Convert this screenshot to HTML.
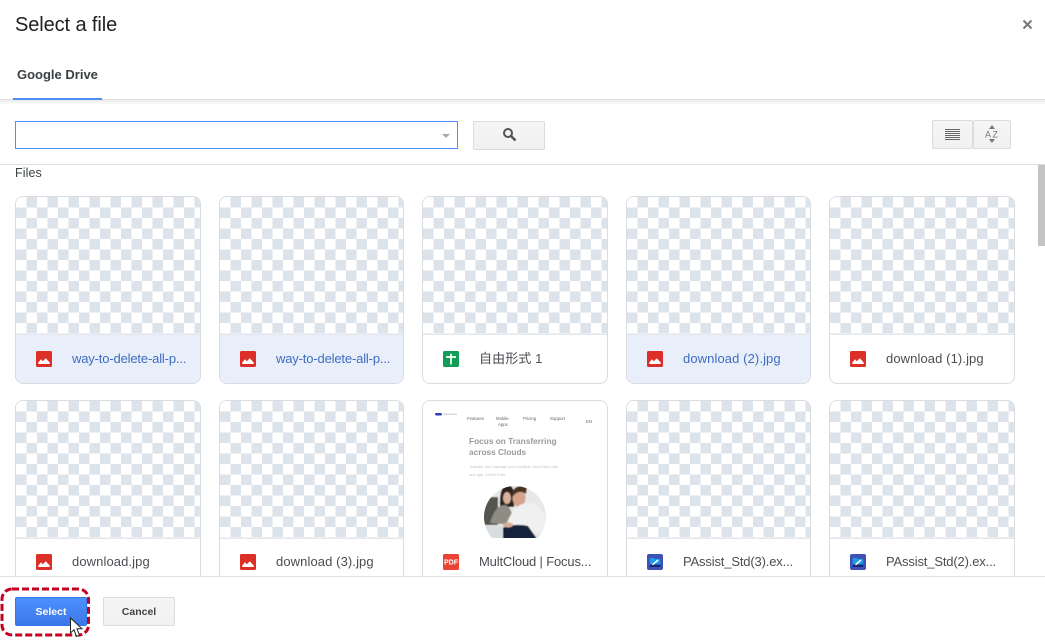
<!DOCTYPE html>
<html><head><meta charset="utf-8"><style>
html,body{margin:0;padding:0;background:#fff}
body{width:1045px;height:641px;position:relative;overflow:hidden;font-family:"Liberation Sans","Noto Sans CJK SC",sans-serif;color:#3c4043}
.a{position:absolute}
.card{position:absolute;width:184px;height:186px;border:1px solid #dadce0;border-radius:8px;overflow:hidden;background:#fff;box-sizing:content-box}
.w2{width:183px}
.thumb{position:absolute;left:0;top:0;right:0;height:137px;background:repeating-conic-gradient(#dde3ea 0 25%,#fff 0 50%) 0 0/21px 21px}
.foot{position:absolute;left:0;right:0;top:137px;bottom:0;border-top:1px solid #e3e6ea;color:#4a4d52}
.sel .foot{background:#e8effb;color:#3f6cc0}
.ic{position:absolute;left:20px;top:16px;width:16px;height:16px}
.nm{position:absolute;left:56px;top:15px;font-size:13px;line-height:18px;white-space:nowrap;letter-spacing:.1px}
.r2 .ic{top:15px}
.r2 .nm{top:14px}
.long{letter-spacing:-.16px}
.btn{position:absolute;box-sizing:border-box;border:1px solid #dcdcdc;border-radius:2px;background:linear-gradient(#f5f5f5,#f1f1f1)}
</style></head><body>
<div class="a" style="left:15px;top:13px;font-size:20px;line-height:24px;color:#202124;letter-spacing:-.1px">Select a file</div>
<svg class="a" style="left:1022px;top:19px" width="11" height="11" viewBox="0 0 11 11"><path d="M1.500 1.500L9.500 9.500M9.500 1.500L1.500 9.500" stroke="#777" stroke-width="2"/></svg>
<div class="a" style="left:17px;top:66px;font-size:13px;line-height:17px;font-weight:bold;color:#3c4043">Google Drive</div>
<div class="a" style="left:0;top:99px;width:1045px;height:1px;background:#dedede"></div>
<div class="a" style="left:0;top:100px;width:1045px;height:5px;background:linear-gradient(#ececec,#fff)"></div>
<div class="a" style="left:13px;top:98px;width:89px;height:2px;background:#4d8df6"></div>

<div class="a" style="left:15px;top:121px;width:443px;height:28px;box-sizing:border-box;border:1px solid #4d90fe"></div>
<div class="a" style="left:442px;top:134px;width:0;height:0;border-left:4px solid transparent;border-right:4px solid transparent;border-top:4px solid #aaa"></div>
<div class="btn" style="left:473px;top:121px;width:72px;height:29px"></div>
<svg class="a" style="left:502px;top:127px" width="15" height="15" viewBox="0 0 15 15"><circle cx="6" cy="6" r="4" fill="none" stroke="#555" stroke-width="2"/><path d="M9 9L13.500 13.500" stroke="#555" stroke-width="2.600"/></svg>
<div class="btn" style="left:932px;top:120px;width:41px;height:29px"></div>
<div class="btn" style="left:973px;top:120px;width:38px;height:29px"></div>
<svg class="a" style="left:945px;top:129px" width="15" height="11" viewBox="0 0 15 11"><path d="M0 .5H15M0 2.500H15M0 4.500H15M0 6.500H15M0 8.500H15M0 10.500H15" stroke="#666" stroke-width="1"/></svg>
<svg class="a" style="left:984px;top:125px" width="16" height="19" viewBox="0 0 16 19"><path d="M8 0L11 4H5Z M8 18L5 14H11Z" fill="#777"/><text x="1" y="12.500" font-size="9" font-family="Liberation Sans" fill="#777">A</text><text x="8.500" y="12.500" font-size="9" font-family="Liberation Sans" fill="#777">Z</text></svg>
<div class="a" style="left:0;top:164px;width:1045px;height:1px;background:#e0e0e0"></div>
<div class="a" style="left:15px;top:166px;font-size:12.500px;line-height:15px;letter-spacing:.1px;color:#3c4043">Files</div>
<div class="a" style="left:1038px;top:165px;width:7px;height:81px;background:#c4c4c4"></div>

<div class="a" style="left:0;top:165px;width:1037px;height:411px;overflow:hidden">
<div class="card sel" style="left:15px;top:31px"><div class="thumb"></div><div class="foot"><svg class="ic" viewBox="0 0 16 16"><rect width="16" height="16" rx="1.500" fill="#dc2f27"/><path d="M2.300 13V11.500L5 8.300L6.800 10.300L9.800 7.200L13.700 11.500V13Z" fill="#fff"/></svg><div class="nm long">way-to-delete-all-p...</div></div></div>
<div class="card sel w2" style="left:219px;top:31px"><div class="thumb"></div><div class="foot"><svg class="ic" viewBox="0 0 16 16"><rect width="16" height="16" rx="1.500" fill="#dc2f27"/><path d="M2.300 13V11.500L5 8.300L6.800 10.300L9.800 7.200L13.700 11.500V13Z" fill="#fff"/></svg><div class="nm long">way-to-delete-all-p...</div></div></div>
<div class="card" style="left:422px;top:31px"><div class="thumb"></div><div class="foot"><svg class="ic" viewBox="0 0 16 16"><rect width="16" height="16" rx="1.500" fill="#0f9d58"/><path d="M3 6H13M8 2.800V13.500" stroke="#fff" stroke-width="1.700" fill="none"/></svg><div class="nm">自由形式 1</div></div></div>
<div class="card sel w2" style="left:626px;top:31px"><div class="thumb"></div><div class="foot"><svg class="ic" viewBox="0 0 16 16"><rect width="16" height="16" rx="1.500" fill="#dc2f27"/><path d="M2.300 13V11.500L5 8.300L6.800 10.300L9.800 7.200L13.700 11.500V13Z" fill="#fff"/></svg><div class="nm">download (2).jpg</div></div></div>
<div class="card" style="left:829px;top:31px"><div class="thumb"></div><div class="foot"><svg class="ic" viewBox="0 0 16 16"><rect width="16" height="16" rx="1.500" fill="#dc2f27"/><path d="M2.300 13V11.500L5 8.300L6.800 10.300L9.800 7.200L13.700 11.500V13Z" fill="#fff"/></svg><div class="nm">download (1).jpg</div></div></div>

<div class="card r2" style="left:15px;top:235px"><div class="thumb"></div><div class="foot"><svg class="ic" viewBox="0 0 16 16"><rect width="16" height="16" rx="1.500" fill="#dc2f27"/><path d="M2.300 13V11.500L5 8.300L6.800 10.300L9.800 7.200L13.700 11.500V13Z" fill="#fff"/></svg><div class="nm">download.jpg</div></div></div>
<div class="card r2 w2" style="left:219px;top:235px"><div class="thumb"></div><div class="foot"><svg class="ic" viewBox="0 0 16 16"><rect width="16" height="16" rx="1.500" fill="#dc2f27"/><path d="M2.300 13V11.500L5 8.300L6.800 10.300L9.800 7.200L13.700 11.500V13Z" fill="#fff"/></svg><div class="nm">download (3).jpg</div></div></div>
<div class="card r2" style="left:422px;top:235px"><div class="thumb" style="background:#fff">
<svg width="184" height="137" viewBox="0 0 184 137" style="position:absolute;left:0;top:0;filter:blur(.35px)">
<defs><clipPath id="c"><circle cx="92" cy="116" r="31"/></clipPath><filter id="b"><feGaussianBlur stdDeviation=".6"/></filter></defs>
<rect x="12" y="12" width="7" height="2.500" rx="1.200" fill="#2c3fb5"/><rect x="20" y="12.500" width="14" height="1.500" fill="#d8d8d8"/>
<g font-family="Liberation Sans" fill="#666" font-size="4.300"><text x="44" y="19">Features</text><text x="73" y="19">Mobile</text><text x="75" y="25">Apps</text><text x="100" y="19">Pricing</text><text x="127" y="19">Support</text><text x="163" y="22">EN</text></g>
<g font-family="Liberation Sans" fill="#9a9a9a" font-size="8.300" font-weight="bold"><text x="46" y="43">Focus on Transferring</text><text x="46" y="54">across Clouds</text></g>
<g font-family="Liberation Sans" fill="#c4c4c4" font-size="4"><text x="46" y="67">Transfer and manage your multiple cloud files with</text><text x="46" y="75">one app. 100% Free.</text></g>
<g clip-path="url(#c)" filter="url(#b)">
<rect x="60" y="84" width="64" height="64" fill="#e8e8e8"/>
<rect x="60" y="96" width="15" height="28" fill="#55554f"/>
<path d="M77 106Q76 84 85 84Q93 84 91 106Z" fill="#2e211d"/>
<ellipse cx="84" cy="97" rx="4" ry="6" fill="#d8b09c"/>
<path d="M67 122Q72 104 82 104Q90 106 90 124Z" fill="#8f8c84"/>
<ellipse cx="96" cy="97" rx="6.500" ry="9" fill="#d4a48c"/>
<path d="M88 92Q94 82 104 86L103 93Q96 88 90 95Z" fill="#4a3020"/>
<path d="M84 122Q92 100 108 102Q123 106 123 125L120 132H88Z" fill="#f0f0f0"/>
<path d="M79 127Q92 122 105 125L121 148H78Z" fill="#16213a"/>
<rect x="60" y="125" width="20" height="22" fill="#dadde0"/>
<ellipse cx="85" cy="124" rx="5" ry="2.500" fill="#d9ae98"/>
</g></svg></div>
<div class="foot" style="border-top-color:transparent"><svg class="ic" viewBox="0 0 16 16"><rect width="16" height="16" rx="1.500" fill="#ea4335"/><text x="8" y="10.700" text-anchor="middle" font-family="Liberation Sans" font-weight="bold" font-size="7" fill="#fff">PDF</text></svg><div class="nm long">MultCloud | Focus...</div></div></div>
<div class="card r2 w2" style="left:626px;top:235px"><div class="thumb"></div><div class="foot"><svg class="ic" viewBox="0 0 16 16"><rect width="16" height="16" rx="2" fill="#3f51b5"/><path d="M2.700 4H7L8 5H13.300V12H2.700Z" fill="#1e9be8"/><path d="M2.700 10.500H13.300V13H2.700Z" fill="#16266f"/><path d="M5.500 10.800L11 6" stroke="#fff" stroke-width="1.500"/></svg><div class="nm long">PAssist_Std(3).ex...</div></div></div>
<div class="card r2" style="left:829px;top:235px"><div class="thumb"></div><div class="foot"><svg class="ic" viewBox="0 0 16 16"><rect width="16" height="16" rx="2" fill="#3f51b5"/><path d="M2.700 4H7L8 5H13.300V12H2.700Z" fill="#1e9be8"/><path d="M2.700 10.500H13.300V13H2.700Z" fill="#16266f"/><path d="M5.500 10.800L11 6" stroke="#fff" stroke-width="1.500"/></svg><div class="nm long">PAssist_Std(2).ex...</div></div></div>
</div>

<div class="a" style="left:0;top:576px;width:1045px;height:65px;background:#fff;border-top:1px solid #e0e0e0;box-sizing:border-box"></div>
<div class="a" style="left:15px;top:597px;width:72px;height:29px;box-sizing:border-box;border:1px solid #3079ed;border-radius:2px;background:linear-gradient(#4d90fe,#3b78e7);color:#fff;font-size:10.500px;font-weight:bold;text-align:center;line-height:27px;padding-top:1px">Select</div>
<div class="btn" style="left:103px;top:597px;width:72px;height:29px;font-size:10.500px;font-weight:bold;text-align:center;line-height:27px;padding-top:1px;color:#444">Cancel</div>
<svg class="a" style="left:0;top:586px" width="92" height="52" viewBox="0 0 92 52"><rect x="2" y="3" width="86.500" height="46" rx="10" fill="none" stroke="#c40020" stroke-width="3" stroke-dasharray="7 3"/></svg>
<svg class="a" style="left:69px;top:617px" width="15" height="21" viewBox="0 0 15 21"><path d="M1.500 1V16L5 12.800L7.500 19.500L10.500 18.200L8 11.800H13Z" fill="#fff" stroke="#222" stroke-width="1"/></svg>
</body></html>
